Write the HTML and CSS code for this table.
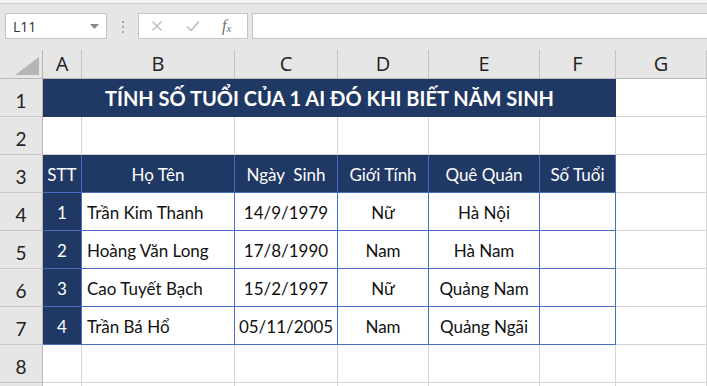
FILE: index.html
```html
<!DOCTYPE html>
<html lang="vi">
<head>
<meta charset="utf-8">
<title>Excel</title>
<link rel="stylesheet" href="styles.css">
</head>
<body>
<div class="topstrip"></div>
<div class="fbar">
  <div class="namebox"><span>L11</span><svg class="dd" width="9" height="5" viewBox="0 0 9 5"><path d="M0 0H9L4.5 5Z" fill="#8a8a8a"/></svg></div>
  <div class="grip"><i></i><i></i><i></i></div>
  <div class="fxbox">
    <svg class="ic" width="12" height="12" viewBox="0 0 12 12"><path d="M1.5 1.5L10.5 10.5M10.5 1.5L1.5 10.5" stroke="#b9b9b9" stroke-width="1.3" fill="none"/></svg>
    <svg class="ic" width="14" height="12" viewBox="0 0 14 12"><path d="M1 6.5L5 10.5L13 1.5" stroke="#b9b9b9" stroke-width="1.5" fill="none"/></svg>
    <span class="fx">f<sub>x</sub></span>
  </div>
  <div class="finput"></div>
</div>
<div class="sheet">
  <div class="corner"><svg width="24" height="18" viewBox="0 0 24 18"><path d="M24 0V18H0Z" fill="#b5b5b5"/></svg></div>
  <div class="ch">A</div><div class="ch">B</div><div class="ch">C</div><div class="ch">D</div><div class="ch">E</div><div class="ch">F</div><div class="ch">G</div>

  <div class="rh">1</div>
  <div class="title">TÍNH SỐ TUỔI CỦA 1 AI ĐÓ KHI BIẾT NĂM SINH</div>
  <div class="c"></div>

  <div class="rh">2</div>
  <div class="c"></div><div class="c"></div><div class="c"></div><div class="c"></div><div class="c"></div><div class="c"></div><div class="c"></div>

  <div class="rh">3</div>
  <div class="c hd">STT</div><div class="c hd">Họ Tên</div><div class="c hd">Ngày&nbsp; Sinh</div><div class="c hd">Giới Tính</div><div class="c hd">Quê Quán</div><div class="c hd last">Số Tuổi</div><div class="c"></div>

  <div class="rh">4</div>
  <div class="c hd">1</div><div class="c td left">Trần Kim Thanh</div><div class="c td">14/9/1979</div><div class="c td">Nữ</div><div class="c td">Hà Nội</div><div class="c td last"></div><div class="c"></div>

  <div class="rh">5</div>
  <div class="c hd">2</div><div class="c td left">Hoàng Văn Long</div><div class="c td">17/8/1990</div><div class="c td">Nam</div><div class="c td">Hà Nam</div><div class="c td last"></div><div class="c"></div>

  <div class="rh">6</div>
  <div class="c hd">3</div><div class="c td left">Cao Tuyết Bạch</div><div class="c td">15/2/1997</div><div class="c td">Nữ</div><div class="c td">Quảng Nam</div><div class="c td last"></div><div class="c"></div>

  <div class="rh">7</div>
  <div class="c hd">4</div><div class="c td left">Trần Bá Hổ</div><div class="c td">05/11/2005</div><div class="c td">Nam</div><div class="c td">Quảng Ngãi</div><div class="c td last"></div><div class="c"></div>

  <div class="rh">8</div>
  <div class="c"></div><div class="c"></div><div class="c"></div><div class="c"></div><div class="c"></div><div class="c"></div><div class="c"></div>

  <div class="rh stub"></div>
  <div class="c stub"></div><div class="c stub"></div><div class="c stub"></div><div class="c stub"></div><div class="c stub"></div><div class="c stub"></div><div class="c stub"></div>
</div>
</body>
</html>
```

FILE: styles.css
```css
* { box-sizing: border-box; }
html, body { margin: 0; padding: 0; }
body {
  width: 707px;
  height: 386px;
  overflow: hidden;
  background: #e6e6e6;
  font-family: Lato, "Liberation Sans", sans-serif;
}
.topstrip {
  height: 4px;
  background: #f3f3f3;
  border-bottom: 1px solid #d0d0d0;
}
.fbar {
  height: 46px;
  display: flex;
  align-items: flex-start;
  padding-top: 9px;
  padding-left: 5px;
  background: #e6e6e6;
}
.namebox {
  width: 102px;
  height: 26px;
  background: #fff;
  border: 1px solid #c6c6c6;
  display: flex;
  align-items: center;
  justify-content: space-between;
  padding: 0 7px 0 7px;
  font-family: "Open Sans", sans-serif;
  font-size: 14px;
  color: #333;
}
.grip {
  width: 31px;
  display: flex;
  flex-direction: column;
  align-items: center;
  gap: 3px;
  padding-top: 8px;
}
.grip i {
  display: block;
  width: 2px;
  height: 2px;
  background: #a8a8a8;
}
.fxbox {
  width: 110px;
  height: 26px;
  background: #fff;
  border: 1px solid #c6c6c6;
  display: flex;
  align-items: center;
  padding: 0 0 0 12px;
  gap: 23px;
}
.fx {
  font-family: "Liberation Serif", serif;
  font-style: italic;
  font-size: 16px;
  color: #707070;
  margin-left: -1px;
}
.fx sub { font-size: 11px; vertical-align: -1px; }
.finput {
  margin-left: 4px;
  flex: 1;
  height: 26px;
  background: #fff;
  border: 1px solid #c6c6c6;
  border-right: none;
}
.sheet {
  display: grid;
  grid-template-columns: 43px 39px 153px 103px 91px 111px 76px 91px;
  grid-template-rows: 29px repeat(8, 38px) 3px;
  background: #fff;
}
.corner {
  background: #e6e6e6;
  border-right: 1px solid #b8b8b8;
  border-bottom: 1px solid #b8b8b8;
  display: flex;
  align-items: flex-end;
  justify-content: flex-end;
  padding: 0 3px 3px 0;
}
.ch {
  background: #e6e6e6;
  border-right: 1px solid #c3c3c3;
  border-bottom: 1px solid #b8b8b8;
  display: flex;
  justify-content: center;
  align-items: flex-end;
  padding-bottom: 2px;
  font-family: "Open Sans", sans-serif;
  font-size: 20px;
  line-height: 24px;
  color: #222;
}
.rh {
  background: #e6e6e6;
  border-right: 1px solid #b8b8b8;
  border-bottom: 1px solid #c8c8c8;
  display: flex;
  justify-content: center;
  align-items: flex-end;
  padding-bottom: 4px;
  font-family: Lato, sans-serif;
  font-size: 19px;
  line-height: 22px;
  color: #222;
}
.title {
  grid-column: span 6;
  background: #203864;
  color: #fff;
  font-weight: bold;
  font-size: 20px;
  line-height: 20px;
  display: flex;
  justify-content: center;
  align-items: flex-end;
  padding-bottom: 9px;
}
.c {
  border-right: 1px solid #d4d4d4;
  border-bottom: 1px solid #d4d4d4;
  display: flex;
  justify-content: center;
  align-items: flex-end;
  padding-bottom: 9px;
  font-size: 17px;
  line-height: 17px;
  color: #111;
  white-space: nowrap;
}
.stub { border-bottom: none; padding: 0; }
.hd {
  background: #203864;
  color: #fff;
  border-right-color: #4a6cc0;
  border-bottom-color: #4a6cc0;
}
.td {
  border-right-color: #4a6cc0;
  border-bottom-color: #4a6cc0;
}
.left { justify-content: flex-start; padding-left: 5px; }
```
